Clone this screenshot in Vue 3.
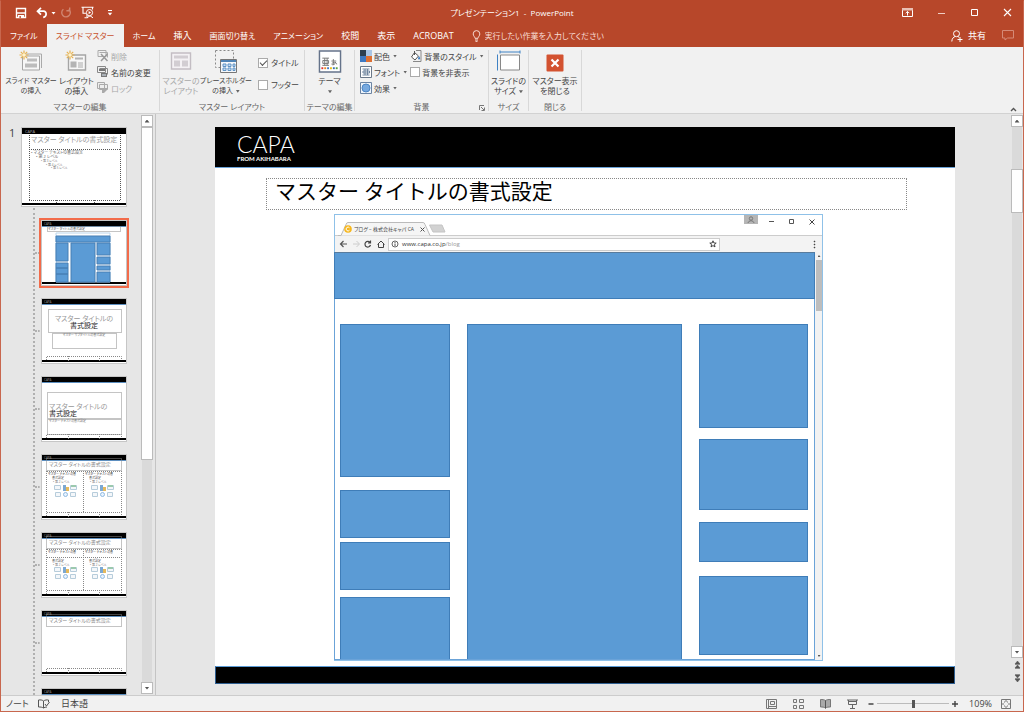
<script setup>
import { ref } from 'vue'

const tabs = [
  { name: 'ファイル', small: true },
  { name: 'スライド マスター', small: true },
  { name: 'ホーム', small: true },
  { name: '挿入' },
  { name: '画面切り替え', small: true },
  { name: 'アニメーション', small: true },
  { name: '校閲' },
  { name: '表示' },
  { name: 'ACROBAT' }
]
const active = ref('スライド マスター')
const showTitle = ref(true)
const showFooter = ref(false)
const hideBg = ref(false)
const zoom = ref(50)
const layouts = ['custom', 'title', 'section', 'two', 'compare', 'titleonly', 'blank']
const selected = ref('custom')
</script>

<template>
  <div class="window">
    <header class="titlebar">
      <div class="quick">
        <button aria-label="上書き保存"><svg width="12" height="12" viewBox="0 0 12 12"><path d="M1.5 1.5h9v9h-9z" fill="none" stroke="#fff" stroke-width="1.4" /><path d="M2 5.2h8v1.5H2zM3 8h6v3H3z" fill="#fff" /><path d="M4.5 9h1.3v2H4.5z" fill="#b7472a" /></svg></button>
        <button class="undo" aria-label="元に戻す"><svg width="20" height="12" viewBox="0 0 20 12"><path d="M5 .8 1.5 4.2 5 7.6M2 4.2h5.5c3.6 0 3.6 5.6-.3 6.2" fill="none" stroke="#fff" stroke-width="1.7" /><path d="M15.5 5h4l-2 2.4z" fill="#fff" /></svg></button>
        <button aria-label="繰り返し"><svg width="12" height="12" viewBox="0 0 12 12"><path d="M3.4 2.2a4.3 4.3 0 1 0 5.4.1M9.7.5v3.2H6.4" fill="none" stroke="#d08571" stroke-width="1.4" /></svg></button>
        <button class="show" aria-label="最初から開始"><svg width="14" height="13" viewBox="0 0 14 13"><path d="M.5 1.3h12M2 1.5v5.7h3M11.5 1.5v2M6 8v3M3.5 11.8h3" fill="none" stroke="#fff" stroke-width="1.1" /><circle cx="8.5" cy="6.6" r="3.1" fill="#b7472a" stroke="#fff" /><path d="m7.6 5 2.5 1.6-2.5 1.6z" fill="#fff" /><path d="m6 11.8 3-2 3 2" fill="none" stroke="#fff" /></svg></button>
        <button class="more" aria-label="クイック アクセス"><svg width="6" height="8" viewBox="0 0 6 8"><path d="M1 1.5h4" stroke="#fff" /><path d="M.8 3.8h4.4L3 6.5z" fill="#fff" /></svg></button>
      </div>
      <h1>プレゼンテーション1&nbsp; -&nbsp; PowerPoint</h1>
      <div class="winctl">
        <button aria-label="リボンの表示"><svg width="11" height="9" viewBox="0 0 11 9"><path d="M.5.5h10v8H.5z" fill="none" stroke="#fff" /><path d="M0 0h11v2.5H0z" fill="#e9c0b4" /><path d="M5.5 7.5v-4M3.7 5.2l1.8-1.8 1.8 1.8" fill="none" stroke="#fff" /></svg></button>
        <button aria-label="最小化"><svg width="9" height="9" viewBox="0 0 9 9"><path d="M1 5.5h7" stroke="#f0cec4" /></svg></button>
        <button aria-label="最大化"><svg width="9" height="9" viewBox="0 0 9 9"><path d="M1.5 1.5h6v6h-6z" fill="none" stroke="#fff" /></svg></button>
        <button aria-label="閉じる"><svg width="9" height="9" viewBox="0 0 9 9"><path d="m1 1 7 7M8 1 1 8" stroke="#fff" stroke-width="1.1" /></svg></button>
      </div>
    </header>

    <nav class="tabs">
      <button v-for="t in tabs" :key="t.name" :class="{ on: t.name === active, small: t.small }" @click="active = t.name">{{ t.name }}</button>
      <label class="tell">
        <svg width="9" height="12" viewBox="0 0 9 12"><path d="M3 8.3C3 6.8 1.2 6 1.2 3.9a3.3 3.3 0 0 1 6.6 0C7.8 6 6 6.8 6 8.3zM3 10h3M3.5 11.4h2" fill="none" stroke="#f7dcd4" /></svg>
        <input type="text" aria-label="操作アシスト" placeholder="実行したい作業を入力してください">
      </label>
      <button class="share"><svg width="12" height="12" viewBox="0 0 12 12"><circle cx="5.5" cy="3.7" r="3" fill="none" stroke="#fff" /><path d="M.8 11.5c.2-3 1.6-4.5 3.4-5M6.7 6.5l1.5.8M9 7v5M6.5 9.5h5" fill="none" stroke="#fff" /></svg>共有</button>
      <button class="comment" aria-label="コメント"><svg width="12" height="11" viewBox="0 0 12 11"><path d="M.5.5h11v7.500H5.500L3 10V8H.5z" fill="none" stroke="#d58a77" /></svg></button>
    </nav>

    <section class="ribbon">
      <div class="group g-edit">
        <div class="tools">
          <button class="big wide"><svg width="25" height="22" viewBox="0 0 25 22"><path d="M7 3.500h15.500v14" fill="none" stroke="#aaa" /><path d="M3.500 5.500h17v14h-17z" fill="#f7f7f7" stroke="#a5a5a5" /><path d="M8 8h10v3H8zM6 13h12v4H6z" fill="#bcbcbc" /><path d="M5 0v9M.5 4.500h9M1.800 1.300l6.400 6.400M8.200 1.300 1.800 7.700" stroke="#e7b14e" stroke-width="1.200" /><circle cx="5" cy="4.500" r="1.800" fill="#fff3cd" /></svg><span>スライド マスター<br>の挿入</span></button>
          <button class="big mid"><svg width="23" height="22" viewBox="0 0 23 22"><path d="M3.500 4.500h17v15h-17z" fill="#f7f7f7" stroke="#a5a5a5" stroke-width="1.400" /><path d="M10 7h8v2h-8zM5.500 11h6v6h-6z" fill="#b4b4b4" /><path d="M13 12.500h5M13 14.500h5M13 16.500h5" stroke="#aaa" /><path d="M5 0v9M.5 4.500h9M1.800 1.300l6.400 6.400M8.200 1.300 1.800 7.700" stroke="#e7b14e" stroke-width="1.200" /><circle cx="5" cy="4.500" r="1.800" fill="#fff3cd" /></svg><span>レイアウト<br>の挿入</span></button>
          <div class="stack">
            <button class="off"><svg width="12" height="12" viewBox="0 0 12 12"><path d="M1 .5h8v6H1zM2.500 2.500h8v5" fill="none" stroke="#aaa" /><path d="m4 4 6.500 7M10.500 4 4 11" stroke="#999" stroke-width="1.500" /></svg>削除</button>
            <button><svg width="12" height="12" viewBox="0 0 12 12"><path d="M.5.5h8v6h-8zM2.500 2.500h8v6" fill="none" stroke="#888" /><path d="M2 3h6v2H2zM4 7h6v4H4z" fill="#777" /><path d="M5 9h4" stroke="#dbe8f5" /></svg>名前の変更</button>
            <button class="off"><svg width="12" height="12" viewBox="0 0 12 12"><path d="M.5.500h7v6h-7zM2.500 2.500h8v5h-8z" fill="#eee" stroke="#aaa" /><path d="M5 6h5v2L7 11H5z" fill="#aaa" /></svg>ロック</button>
          </div>
        </div>
        <h2>マスターの編集</h2>
      </div>
      <div class="group g-layout">
        <div class="tools">
          <button class="big off mid"><svg width="22" height="22" viewBox="0 0 22 22"><path d="M1.500 2.500h19v16h-19z" fill="#f4f1f4" stroke="#c3bdc3" stroke-width="1.400" /><path d="M4 5h14v3H4zM4 10h6v6H4zM12 10h6v6h-6z" fill="#d2cdd2" /></svg><span>マスターの<br>レイアウト</span></button>
          <button class="big wide"><svg width="24" height="23" viewBox="0 0 24 23"><path d="M1.500.500h18v17h-18z" fill="none" stroke="#888" stroke-dasharray="2 2" /><path d="M6.500 9.500h16v13h-16z" fill="#f5f8fb" stroke="#777" /><path d="M7 10h15v2H7z" fill="#4f83b5" /><path d="M9 14h3v2.500H9zm5 0h3v2.500h-3zm5 0h2v2.500h-2zM9 18h3v2.500H9zm5 0h3v2.500h-3zm5 0h2v2.500h-2z" fill="#c7ddf3" stroke="#5f93c5" /></svg><span>プレースホルダー<br>の挿入 <i class="dd"></i></span></button>
          <div class="checks">
            <label><input v-model="showTitle" type="checkbox">タイトル</label>
            <label><input v-model="showFooter" type="checkbox">フッター</label>
          </div>
        </div>
        <h2>マスター レイアウト</h2>
      </div>
      <div class="group g-theme">
        <div class="tools">
          <button class="big fill"><svg class="themeicon" width="24" height="24" viewBox="0 0 24 24"><path d="M1 1h22v22H1z" fill="#fff" stroke="#65738a" stroke-width="1.500" /><path d="M4 8.500h7M4 16h7M6.500 8.500V16M9 8.500V16M4.500 11h6v3h-6z" fill="none" stroke="#777" /><path d="M13.500 11.500h5M15.500 9.500c0 4 .2 5 1 6M18 12.500c-1 3-4 4-4 2s5-2.500 5 .5" fill="none" stroke="#777" /><path d="M3 18h2v2H3z" fill="#d33" /><path d="M6 18h2v2H6z" fill="#e98b25" /><path d="M9 18h2v2H9z" fill="#3f79c5" /><path d="M12 18h2v2h-2z" fill="#e6be1b" /><path d="M15 18h2v2h-2z" fill="#3a70b9" /><path d="M18 18h2v2h-2z" fill="#58a046" /></svg><span>テーマ<br><i class="dd"></i></span></button>
        </div>
        <h2>テーマの編集</h2>
      </div>
      <div class="group g-bg">
        <div class="tools">
          <div class="stack">
            <button><svg width="12" height="12" viewBox="0 0 12 12"><path d="M0 0h6v6H0z" fill="#2c3e50" /><path d="M6 0h6v6H6z" fill="#a9c5e5" /><path d="M0 6h6v6H0z" fill="#3e78c1" /><path d="M6 6h6v6H6z" fill="#dd7034" /></svg>配色 <i class="dd"></i></button>
            <button><svg width="12" height="12" viewBox="0 0 12 12"><path d="M.500.500h11v11H.500z" fill="#fff" stroke="#6b7889" /><path d="M2.500 3h7M2.500 9h7M5 3v6M7.500 3v6M3 5h6.500v2H3z" fill="none" stroke="#71859e" /></svg>フォント <i class="dd"></i></button>
            <button><svg width="12" height="12" viewBox="0 0 12 12"><path d="M.500.500h11v11H.500z" fill="#eef4fb" stroke="#6c84a2" /><circle cx="6" cy="6" r="4" fill="#77a9df" stroke="#4c85c4" /></svg>効果 <i class="dd"></i></button>
          </div>
          <div class="stack second">
            <button><svg width="12" height="12" viewBox="0 0 12 12"><path d="M6 .5h5v11H3" fill="none" stroke="#888" /><path d="m4.500 2.500 4 3.500-3.500 4L1.500 7zM4.500 5V1" fill="#fff" stroke="#555" /><path d="M9 6c1.500 2 1.500 3.500 0 3.500S8 8 9 6z" fill="#3f7fc3" /></svg>背景のスタイル <i class="dd"></i></button>
            <label><input v-model="hideBg" type="checkbox">背景を非表示</label>
          </div>
        </div>
        <h2>背景</h2>
        <button class="launcher" aria-label="背景の書式設定"><svg width="6" height="6" viewBox="0 0 6 6"><path d="M.5 5V.5H5M2 2l3 3M5.500 2.500v3h-3" fill="none" stroke="#777" /></svg></button>
      </div>
      <div class="group g-size">
        <div class="tools"><button class="big fill"><svg width="24" height="22" viewBox="0 0 24 22"><path d="M3.500 4.500h19v15h-19z" fill="#fff" stroke="#888" /><path d="M3 1.500h20M.500 4v16" stroke="#3f82c4" /><path d="M3 0v3M23 0v3" stroke="#3f82c4" /></svg><span>スライドの<br>サイズ <i class="dd"></i></span></button></div>
        <h2>サイズ</h2>
      </div>
      <div class="group g-close">
        <div class="tools"><button class="big fill"><svg width="18" height="22" viewBox="0 0 18 22"><rect x=".5" y="4" width="17" height="17" rx="1" fill="#d35230" /><path d="m5.500 9 7 7M12.500 9l-7 7" stroke="#fff" stroke-width="2.200" /></svg><span>マスター表示<br>を閉じる</span></button></div>
        <h2>閉じる</h2>
      </div>
      <button class="collapse" aria-label="リボンを折りたたむ"><svg width="7" height="5" viewBox="0 0 7 5"><path d="m1 4 2.500-2.500L6 4" fill="none" stroke="#555" stroke-width="1.400" /></svg></button>
    </section>

    <main class="work">
      <aside class="panel">
        <span class="num">1</span>
        <div class="master">
          <svg width="104" height="78" viewBox="0 0 104 78">
            <path d="M0 0h104v78H0z" fill="#fff" /><path d="M0 0h104v6H0zM0 75h104v2H0z" fill="#000" />
            <text x="3" y="5" font-size="4" fill="#aaa">CAPA</text>
            <path d="M7.500 7v66M98.500 7v66M7 21.500h92M7 72.500h92M34.500 72v4M72.500 72v4" stroke="#555" stroke-dasharray="1 1" fill="none" />
            <text x="9" y="14" font-size="7" fill="#999">マスター タイトルの書式設定</text>
            <g font-size="4" fill="#666"><text x="9" y="26">• マスター テキストの書式設定</text><text x="14" y="30">• 第 2 レベル</text></g>
            <g font-size="3" fill="#777"><text x="19" y="34">• 第 3 レベル</text><text x="24" y="38">• 第 4 レベル</text><text x="29" y="41">• 第 5 レベル</text></g>
          </svg>
        </div>
        <ul class="layouts">
          <li v-for="l in layouts" :key="l" :class="{ sel: l === selected }">
            <button :aria-label="'レイアウト ' + l" @click="selected = l">
              <svg width="84" height="64" viewBox="0 0 84 64">
                <path d="M0 0h84v64H0z" fill="#fff" /><path d="M0 0h84v5H0zM0 61h84v2H0z" fill="#000" />
                <path d="M0 5.500h84" stroke="#5d8fc0" /><text x="2" y="4" font-size="3" fill="#999">CAPA</text>
                <path v-if="l !== 'custom'" d="M4.500 61v-3.500h75V61M26.500 57v5M57.500 57v5" class="dash" />
                <template v-if="l === 'custom'">
                  <path d="M5.500 5.500h73v5h-73z" class="dash" /><text x="6" y="9" font-size="3" fill="#555">マスター タイトルの書式設定</text>
                  <path d="M14 12h54v49H14z" fill="#fff" stroke="#bcd6ec" /><path d="M14 15h54v6H14zM14 22h12v18H14zM14 42h12v5H14zM14 47h12v6H14zM14 53h12v8H14zM29 22h24v39H29zM55 22h13v12H55zM55 36h13v7H55zM55 45h13v4H55zM55 51h13v10H55z" fill="#5b9bd5" stroke="#477fb4" />
                </template>
                <template v-if="l === 'title'">
                  <path d="M6.500 10.500h73v23h-73zM10.500 34.500h64v15h-64z" class="dash" /><text x="42" y="22" class="ttl">マスター タイトルの</text><text x="42" y="29" class="ttl dark">書式設定</text><text x="42" y="37" font-size="3" text-anchor="middle" fill="#777">マスター サブタイトルの書式設定</text>
                </template>
                <template v-if="l === 'section'">
                  <path d="M5.500 15.500h74v26h-74zM5.500 42.500h74v15h-74z" class="dash" /><text x="7" y="32" class="ttl start">マスター タイトルの</text><text x="7" y="39" class="ttl start dark">書式設定</text><text x="7" y="45" font-size="3" fill="#777">マスター テキストの書式設定</text>
                </template>
                <template v-if="['two', 'compare', 'titleonly'].includes(l)">
                  <path d="M4.500 3.500h75v12h-75z" class="dash" /><text x="7" y="11" font-size="5" fill="#888">マスター タイトルの書式設定</text>
                </template>
                <template v-if="l === 'two' || l === 'compare'">
                  <path d="M4.500 16v41M41.500 16v41M79.500 16v41M5 16.500h74" class="dash" />
                  <path v-if="l === 'compare'" d="M5 24.500h74" class="dash" />
                  <g v-for="x in [6, 43]" :key="x">
                    <text :x="x" y="20" font-size="3" fill="#444">マスター テキストの書</text><text :x="x + 4" :y="l === 'two' ? 24 : 29" font-size="3" fill="#555">書式設定</text><text :x="x + 5" :y="l === 'two' ? 28 : 33" font-size="3" fill="#777">• 第 2 レベル</text>
                    <g :transform="`translate(${x + 6} ${l === 'two' ? 30 : 34})`"><path d="M.500.500h6v4h-6zM16.500.500h6v4h-6zM1.500 7.500h5v4h-5zM16.500 7.500h5v4h-5z" fill="#f4f7fa" stroke="#b6ccdb" /><path d="M9 0h3v6H9z" fill="#7ca8d2" /><path d="M12 2h3v4h-3z" fill="#e4b95c" /><path d="M17 0h5v2h-5z" fill="#9bc9ae" /><circle cx="11.500" cy="9.500" r="2" fill="#e7f3ff" stroke="#90b9df" /></g>
                  </g>
                </template>
              </svg>
            </button>
          </li>
        </ul>
      </aside>
      <div class="scroll left"><button aria-label="上へ" class="up"></button><i class="thumb"></i><i class="track"></i><button aria-label="下へ" class="down"></button></div>

      <div class="canvas">
        <article class="slide">
          <div class="band"><strong>CAPA</strong><small>FROM AKIHABARA</small></div>
          <h3>マスター タイトルの書式設定</h3>
          <div class="browser">
            <div class="strip">
              <svg class="tabshape" width="111" height="14" viewBox="0 0 111 14"><path d="M0 13.500h3L8 2.500Q8.500.500 10 .500h75q1.500 0 2 2l5 11" fill="#f5f5f5" stroke="#bbb" /><path d="m91.500 3 12.500 0 3 7H95z" fill="#d2d2d2" stroke="#c4c4c4" /></svg>
              <div class="btab"><svg width="8" height="8" viewBox="0 0 8 8"><circle cx="4" cy="4" r="3.800" fill="#f7b71d" /><path d="M5.500 2.800a1.900 1.900 0 1 0 0 2.400" fill="none" stroke="#fff" /></svg><span>ブログ – 株式会社キャパ CA</span><svg width="5" height="5" viewBox="0 0 5 5"><path d="m.5.5 4 4M4.500.500l-4 4" stroke="#555" /></svg></div>
              <div class="bctl">
                <svg width="76" height="12" viewBox="0 0 76 12"><path d="M0 0h14v9H0z" fill="#b5b5b5" /><circle cx="7" cy="3.500" r="1.700" fill="none" stroke="#777" /><path d="M4 8c.5-3 5.500-3 6 0" fill="none" stroke="#777" /><path d="M25 6.500h5" stroke="#555" /><path d="M45.500 4.500h4v4h-4z" fill="none" stroke="#555" /><path d="m65.500 4.500 5 5M70.500 4.500l-5 5" stroke="#444" /></svg>
              </div>
            </div>
            <div class="bar">
              <svg width="48" height="10" viewBox="0 0 48 10"><path d="M8 5H2M4.500 2 1.500 5l3 3" fill="none" stroke="#555" stroke-width="1.200" /><path d="M14 5h6M17.500 2l3 3-3 3" fill="none" stroke="#ccc" /><path d="M31 3.500a2.800 2.800 0 1 0 .5 2.500M31.500 1.500V4H29" fill="none" stroke="#444" stroke-width="1.200" /><path d="M38.500 5.500 42 2l3.500 3.500M39.500 5v3.500h5V5" fill="none" stroke="#444" /></svg>
              <div class="url"><svg width="8" height="8" viewBox="0 0 8 8"><circle cx="4" cy="4" r="3" fill="none" stroke="#666" /><path d="M4 3.500V6M4 2v1" stroke="#555" /></svg><span>www.capa.co.jp<em>/blog</em></span><svg class="star" width="8" height="8" viewBox="0 0 8 8"><path d="m4 .8.9 2.200 2.300.1-1.800 1.500.6 2.300L4 5.600 2 6.900l.6-2.300L.8 3.100l2.300-.1z" fill="none" stroke="#444" /></svg></div>
              <svg class="dots" width="3" height="9" viewBox="0 0 3 9"><path d="M1 1h1v1H1zM1 4h1v1H1zM1 7h1v1H1z" fill="#444" stroke="#444" stroke-width=".5" /></svg>
            </div>
            <div class="view">
              <div class="page">
                <div class="block hero"></div>
                <div class="cols">
                  <div class="col lcol"><div class="block a1"></div><div class="block a2"></div><div class="block a3"></div><div class="block a4"></div></div>
                  <div class="col ccol"><div class="block a0"></div></div>
                  <div class="col rcol"><div class="block b1"></div><div class="block b2"></div><div class="block b3"></div><div class="block b4"></div></div>
                </div>
              </div>
              <div class="bscroll"><i class="up"></i><b></b><i class="down"></i></div>
            </div>
          </div>
          <div class="foot"></div>
        </article>
      </div>

      <div class="scroll right"><button aria-label="上へ" class="up"></button><i class="track before"></i><i class="thumb"></i><i class="track"></i><button aria-label="下へ" class="down"></button>
        <button class="page-btn" aria-label="前のスライド"><svg width="7" height="8" viewBox="0 0 7 8"><path d="M3.500 0 6 3H1zM3.500 4 6 7H1zM1 3.500h5M1 7.500h5" fill="#555" stroke="#555" stroke-width=".5" /></svg></button>
        <button class="page-btn" aria-label="次のスライド"><svg width="7" height="8" viewBox="0 0 7 8"><path d="M3.500 4 6 1H1zM3.500 8 6 5H1zM1 .5h5M1 4.500h5" fill="#555" stroke="#555" stroke-width=".5" /></svg></button>
      </div>
    </main>

    <footer class="status">
      <button>ノート</button>
      <button class="spell" aria-label="スペルチェック"><svg width="12" height="10" viewBox="0 0 12 10"><path d="M5.500 2v7M5.500 2C4 .8 2.500.8.500 1v7c2 0 3.500 0 5 1 1-.7 2-1 3.500-1M5.500 2C7 .8 9 .8 10.500 1v2M7 5l1.500 2 3-4" fill="none" stroke="#555" /></svg></button>
      <button class="lang">日本語</button>
      <div class="views">
        <button aria-label="標準"><svg width="11" height="10" viewBox="0 0 11 10"><path d="M.500.500h10v9H.500zM2.500 1v8M2.500 7.500h8M4.500 2.500h4v3h-4z" fill="none" stroke="#777" /></svg></button>
        <button aria-label="スライド一覧"><svg width="11" height="10" viewBox="0 0 11 10"><path d="M.500.500h3v3h-3zM6.500.500h4v3h-4zM.500 6.500h3v3h-3zM6.500 6.500h4v3h-4z" fill="none" stroke="#777" /></svg></button>
        <button aria-label="閲覧表示"><svg width="11" height="10" viewBox="0 0 11 10"><path d="M5.500 1.500c-1.500-1-3-1-5-1v7.500c2 0 3.500 0 5 1 1.500-1 3-1 5-1V.500c-2 0-3.500 0-5 1z" fill="#aaa" stroke="#777" /><path d="M5.500 1.500v8" stroke="#555" /></svg></button>
        <button aria-label="スライド ショー"><svg width="11" height="10" viewBox="0 0 11 10"><path d="M0 1h11M1.500 1v4.500h8V1M5.500 6v3M3 9.500h5M2 2.500h7" fill="none" stroke="#666" /></svg></button>
      </div>
      <button class="pm" aria-label="縮小"><svg width="6" height="6" viewBox="0 0 6 6"><path d="M.5 3h5" stroke="#444" stroke-width="1.500" /></svg></button>
      <input v-model="zoom" class="zoom" type="range" min="0" max="100" aria-label="ズーム">
      <button class="pm" aria-label="拡大"><svg width="6" height="6" viewBox="0 0 6 6"><path d="M0 3h6M3 0v6" stroke="#444" stroke-width="1.400" /></svg></button>
      <button class="pct">109%</button>
      <button class="fit" aria-label="ウィンドウに合わせる"><svg width="10" height="10" viewBox="0 0 10 10"><path d="M.500.500h9v9h-9z" fill="none" stroke="#777" /><path d="M5 0v3M5 7v3M0 5h3M7 5h3M3 3h1M6 3h1M3 7h1M6 7h1" stroke="#777" /></svg></button>
    </footer>
  </div>
</template>

<style>
body { margin: 0; background: #fff; }
</style>

<style scoped>
* { box-sizing: border-box; }
.window { display: flex; flex-direction: column; height: calc(100vh - 2px); min-height: 480px; border: 1px solid #c8674e; border-top-color: #b7472a; background: #e6e6e6; color: #444; font: 9px/11px "Open Sans", "Noto Sans CJK JP", sans-serif; font-feature-settings: "palt"; overflow: hidden; }
button { font: inherit; font-feature-settings: inherit; color: inherit; border: 0; background: none; padding: 0; white-space: nowrap; }
svg { display: block; flex: none; }
h1, h2, h3, ul { margin: 0; padding: 0; font-weight: 400; }
input { margin: 0; }

.titlebar { display: grid; grid-template-columns: 1fr auto 1fr; align-items: center; height: 23px; background: #b7472a; color: #fff; }
.titlebar h1 { font-size: 8px; }
.quick { display: flex; align-items: center; padding-left: 14px; }
.undo { margin-left: 9px; }
.undo + button { margin-left: 4px; }
.show { margin-left: 9px; }
.more { margin-left: 12px; }
.winctl { display: flex; justify-content: flex-end; gap: 24px; padding-right: 11px; }

.tabs { display: flex; height: 23px; background: #b7472a; color: #fff; }
.tabs > button { padding: 0 9px; }
.tabs > .small { font-size: 8px; }
.tabs > .on { background: #f1f1f1; color: #c8512f; }
.tell { display: flex; align-items: center; gap: 4px; margin-left: 9px; flex: 1; }
.tell input { flex: 1; min-width: 80px; border: 0; padding: 0; background: none; font: inherit; font-size: 8px; font-feature-settings: inherit; outline: 0; }
.tell input::placeholder { color: #f7dcd4; opacity: 1; }
.tabs .share { display: flex; align-items: center; gap: 5px; padding: 0; margin-right: 16px; }
.tabs .comment { padding: 0; margin-right: 9px; }

.ribbon { display: flex; height: 67px; padding-top: 3px; background: #f1f1f1; border-bottom: 1px solid #d2d2d2; position: relative; font-size: 8px; }
.group { display: flex; flex-direction: column; justify-content: space-between; height: 61px; border-right: 1px solid #d8d8d8; position: relative; }
.group h2 { font-size: 8px; line-height: 9px; text-align: center; color: #666; white-space: nowrap; }
.tools { display: flex; padding-left: 3px; }
.g-edit { width: 159px; }
.g-layout { width: 145px; }
.g-theme { width: 50px; }
.g-bg { width: 134px; }
.g-size { width: 40px; }
.g-close { width: 53px; }
.g-theme .tools, .g-size .tools, .g-close .tools { padding: 0; }
.big { display: flex; flex-direction: column; align-items: center; gap: 3px; line-height: 10px; text-align: center; }
.big svg { height: 23px; }
.wide { width: 54px; font-size: 7px; }
.mid { width: 37px; }
.fill { width: 100%; }
.g-layout .mid { width: 36px; }
.off { color: #a8a8a8; }
.stack { display: flex; flex-direction: column; gap: 4px; margin-left: 2px; }
.stack button, .stack label { display: flex; align-items: center; gap: 2px; height: 12px; white-space: nowrap; }
.second { margin-left: 3px; }
.checks { display: flex; flex-direction: column; gap: 11px; padding: 7px 0 0 5px; }
.checks label { display: flex; align-items: center; gap: 3px; white-space: nowrap; }
input[type=checkbox] { appearance: none; width: 10px; height: 10px; border: 1px solid #aaa; background: #fff; }
input[type=checkbox]:checked::before { content: ""; display: block; width: 6px; height: 3px; margin: 1px; border: solid #555; border-width: 0 0 1px 1px; transform: rotate(-45deg); }
.dd { display: inline-block; width: 4px; height: 3px; margin-left: 1px; background: #666; clip-path: polygon(0 0, 100% 0, 50% 100%); vertical-align: middle; }
.launcher { position: absolute; right: 3px; bottom: 0; }
.collapse { margin: auto 6px 1px auto; }

.work { flex: 1; display: flex; min-height: 0; }
.panel { width: 140px; overflow: hidden; padding: 13px 0 0 8px; display: grid; grid-template-columns: 12px 1fr; grid-template-rows: 81px 1fr; }
.num { font-size: 11px; line-height: 12px; }
.master { padding: 1px 0 0 1px; width: 106px; height: 80px; }
.master svg, .layouts svg { outline: 1px solid #c6c6c6; }
.layouts { grid-column: 1 / 3; list-style: none; margin-left: 24px; border-left: 2px dotted #b0b0b0; padding-top: 12px; overflow: hidden; }
.layouts li { display: flex; align-items: center; height: 66px; margin-bottom: 12px; }
.layouts li::before { content: ""; width: 5px; border-top: 2px dotted #b0b0b0; margin-right: 1px; }
.layouts button { border: 1px solid transparent; }
.layouts .sel button { outline: 2px solid #f26b4a; }
.dash { fill: none; stroke: #888; stroke-dasharray: 1 1; }
.ttl { font-size: 7px; fill: #999; text-anchor: middle; }
.ttl.start { text-anchor: start; }
.ttl.dark { fill: #222; }

.scroll { width: 12px; display: flex; flex-direction: column; background: #e6e6e6; padding-top: 1px; }
.scroll .up, .scroll .down { height: 12px; border: 1px solid #bbb; background: #fff; display: grid; place-items: center; }
.scroll .up::before, .scroll .down::before, .bscroll i::before { content: ""; width: 5px; height: 3px; background: #555; clip-path: polygon(50% 0, 100% 100%, 0 100%); }
.scroll .down::before, .bscroll .down::before { clip-path: polygon(0 0, 100% 0, 50% 100%); }
.track { flex: 1; background: #dadada; margin: 0 1px; }
.thumb { background: #fff; border: 1px solid #bbb; }
.left .thumb { flex: 0 0 333px; }
.right .before { flex: 0 0 42px; }
.right .thumb { flex: 0 0 44px; }
.left { padding-bottom: 1px; }
.right { padding-bottom: 11px; }
.page-btn { display: grid; place-items: center; height: 13px; }

.canvas { flex: 1; border-left: 1px solid #c4c4c4; margin-left: 2px; padding: 13px 56px 11px 59px; display: flex; }
.slide { flex: 1; display: flex; flex-direction: column; background: #fff; min-width: 0; }
.band { height: 41px; background: #000; border-bottom: 1px solid #6ba3d8; color: #fff; padding: 6px 0 0 22px; font-family: Lato, sans-serif; display: flex; flex-direction: column; }
.band strong { font-size: 23px; line-height: 22px; font-weight: 300; }
.band small { font-size: 6px; line-height: 7px; font-weight: 700; }
.slide h3 { margin: 10px 48px 4px 51px; height: 32px; border: 1px dotted #888; padding: 0 8px; font-size: 21px; line-height: 22px; color: #000; font-feature-settings: normal; font-family: "Noto Sans CJK JP", sans-serif; }
.browser { flex: 1; min-height: 0; margin: 0 132px 5px 119px; border: 1px solid #8fc1e8; display: flex; flex-direction: column; }
.strip { height: 21px; position: relative; border-bottom: 1px solid #ccc; display: flex; justify-content: space-between; align-items: flex-start; font-size: 5px; line-height: 8px; color: #444; }
.bctl { margin-right: 2px; }
.tabshape { position: absolute; left: 3px; top: 7px; }
.btab { display: flex; align-items: center; gap: 2px; margin: 10px 0 0 9px; position: relative; }
.btab span { width: 64px; white-space: nowrap; }
.bar { height: 16px; background: #f3f3f3; display: flex; align-items: center; padding: 0 6px 0 4px; font-size: 6px; }
.url { width: 332px; height: 13px; margin-left: 1px; border: 1px solid #ccc; background: #fff; display: flex; align-items: center; gap: 3px; padding: 0 2px; color: #333; }
.url em { font-style: normal; color: #999; }
.star { margin-left: auto; }
.dots { margin-left: auto; }
.view { flex: 1; display: flex; min-height: 0; }
.page { flex: 1; border: 1px solid #6ba3d8; border-top: 0; display: flex; flex-direction: column; margin-left: -1px; }
.block { background: #5b9bd5; border: 1px solid #3f7db8; }
.hero { flex: 0 0 47px; margin: 0 -1px; border-top: 1px solid #587b9c; }
.cols { flex: 1; display: flex; padding: 25px 6px 0 5px; }
.col { display: flex; flex-direction: column; }
.lcol { flex: 110 0 0; }
.ccol { flex: 214 0 0; margin: 0 17px; }
.rcol { flex: 109 0 0; padding-bottom: 4px; }
.a0 { flex: 1; border-bottom: 0; }
.a1 { flex: 154 0 0; margin-bottom: 13px; }
.a2 { flex: 48 0 0; margin-bottom: 4px; }
.a3 { flex: 47 0 0; margin-bottom: 7px; }
.a4 { flex: 62 0 0; border-bottom: 0; }
.b1 { flex: 105 0 0; margin-bottom: 11px; }
.b2 { flex: 71 0 0; margin-bottom: 12px; }
.b3 { flex: 40 0 0; margin-bottom: 14px; }
.b4 { flex: 79 0 0; }
.bscroll { width: 7px; background: #f2f2f2; display: flex; flex-direction: column; padding-left: 1px; }
.bscroll i { height: 8px; display: grid; place-items: center; }
.bscroll i::before { width: 3px; height: 2px; }
.bscroll b { height: 51px; background: #bdbdbd; }
.bscroll .down { margin-top: auto; }
.foot { height: 18px; background: #000; border: 1px solid #2f5f91; border-top-color: #5b9bd5; }

.status { display: flex; align-items: center; height: 16px; background: #f1f1f1; border-top: 1px solid #ccc; padding: 0 12px 0 5px; }
.spell { margin-left: 9px; }
.lang { margin-left: 11px; }
.views { display: flex; gap: 16px; margin-left: auto; margin-right: 10px; }
.zoom { appearance: none; width: 72px; height: 9px; margin: 0 3px; background: linear-gradient(#bbb, #bbb) center / 100% 1px no-repeat; }
.zoom::-webkit-slider-thumb { appearance: none; width: 3px; height: 8px; background: #555; }
.pct { margin-left: 11px; }
.fit { margin-left: 9px; }
</style>
